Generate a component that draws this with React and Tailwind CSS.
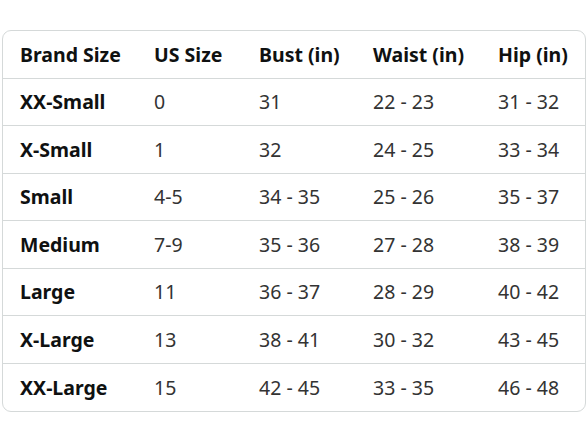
import React from "react";

const rows = [
  ["XX-Small", "0", "31", "22 - 23", "31 - 32"],
  ["X-Small", "1", "32", "24 - 25", "33 - 34"],
  ["Small", "4-5", "34 - 35", "25 - 26", "35 - 37"],
  ["Medium", "7-9", "35 - 36", "27 - 28", "38 - 39"],
  ["Large", "11", "36 - 37", "28 - 29", "40 - 42"],
  ["X-Large", "13", "38 - 41", "30 - 32", "43 - 45"],
  ["XX-Large", "15", "42 - 45", "33 - 35", "46 - 48"],
];

const headers = ["Brand Size", "US Size", "Bust (in)", "Waist (in)", "Hip (in)"];
const widths = ["w-[134px]", "w-[105px]", "w-[114px]", "w-[125px]", "w-[105px]"];

export default function App() {
  return (
    <div className="w-[588px] h-[441px] bg-white pt-[30px] px-[2px] font-['Noto_Sans',sans-serif] text-[19.5px] leading-none">
      <div className="border border-[#d5d9d9] rounded-[9px] overflow-hidden">
        <table className="w-full border-collapse table-fixed">
          <colgroup>
            {widths.map((w, i) => (
              <col key={i} className={w} />
            ))}
          </colgroup>
          <thead>
            <tr className="h-[47px] border-b border-[#d5d9d9]">
              {headers.map((h) => (
                <th key={h} className="text-left font-bold text-[#0f1111] pl-[17px] p-0 whitespace-nowrap">
                  {h}
                </th>
              ))}
            </tr>
          </thead>
          <tbody>
            {rows.map((r, i) => (
              <tr
                key={r[0]}
                className={`h-[47.6px] ${i < rows.length - 1 ? "border-b border-[#d5d9d9]" : ""}`}
              >
                {r.map((c, j) => (
                  <td
                    key={j}
                    className={`pl-[17px] p-0 whitespace-nowrap ${j === 0 ? "font-bold text-[#0f1111]" : "text-[#333333]"}`}
                  >
                    {c}
                  </td>
                ))}
              </tr>
            ))}
          </tbody>
        </table>
      </div>
    </div>
  );
}
